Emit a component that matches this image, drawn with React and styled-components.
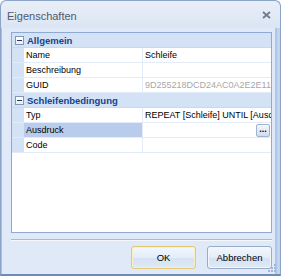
import React from 'react';
import styled, { createGlobalStyle } from 'styled-components';

const GlobalStyle = createGlobalStyle`
  html, body {
    margin: 0;
    padding: 0;
    background: #ffffff;
  }
  body {
    font-family: "Liberation Sans", Arial, sans-serif;
  }
`;

const groups = [
  {
    title: 'Allgemein',
    rows: [
      { label: 'Name', value: 'Schleife' },
      { label: 'Beschreibung', value: '' },
      { label: 'GUID', value: '9D255218DCD24AC0A2E2E1122', disabled: true },
    ],
  },
  {
    title: 'Schleifenbedingung',
    rows: [
      { label: 'Typ', value: 'REPEAT [Schleife] UNTIL [Ausdruck]' },
      { label: 'Ausdruck', value: '', selected: true, button: true },
      { label: 'Code', value: '' },
    ],
  },
];

const App = () => {
  return (
    <>
      <GlobalStyle />
      <Window>
        <TitleBar>
          <Title>Eigenschaften</Title>
          <Close>
            <svg width="9" height="8" viewBox="0 0 9 8">
              <path d="M1 1 L8 7 M8 1 L1 7" stroke="#6f7c8e" strokeWidth="1.8" />
            </svg>
          </Close>
        </TitleBar>
        <Body>
          <Grid>
            {groups.map((g) => (
              <React.Fragment key={g.title}>
                <Category>
                  <Margin>
                    <Toggle />
                  </Margin>
                  <CategoryText>{g.title}</CategoryText>
                </Category>
                {g.rows.map((r) => (
                  <Row key={r.label}>
                    <Margin />
                    <Label selected={r.selected}>{r.label}</Label>
                    <Value disabled={r.disabled}>
                      <span>{r.value}</span>
                      {r.button && <DotsButton>...</DotsButton>}
                    </Value>
                  </Row>
                ))}
              </React.Fragment>
            ))}
          </Grid>
          <Separator />
          <Buttons>
            <Button primary>OK</Button>
            <Button>Abbrechen</Button>
          </Buttons>
          <Grip>
            <svg width="8" height="8" viewBox="0 0 8 8">
              <g fill="#9fb6d6">
                <rect x="6" y="0" width="2" height="2" />
                <rect x="3" y="3" width="2" height="2" />
                <rect x="6" y="3" width="2" height="2" />
                <rect x="0" y="6" width="2" height="2" />
                <rect x="3" y="6" width="2" height="2" />
                <rect x="6" y="6" width="2" height="2" />
              </g>
            </svg>
          </Grip>
        </Body>
      </Window>
    </>
  );
};

export default App;

const Window = styled.div`
  position: relative;
  box-sizing: border-box;
  width: 281px;
  height: 276px;
  display: flex;
  flex-direction: column;
  border: 1px solid #8ba4c7;
  border-bottom: 2px solid #6f8cb8;
  border-radius: 6px 6px 0 0;
  background: #dfe9f7;
  box-shadow: inset 1px 0 0 #a9bfdf, inset -3px 0 0 #c2d4ec, inset -5px 0 0 #aec5e4;
  overflow: hidden;
`;

const TitleBar = styled.div`
  height: 27px;
  display: flex;
  align-items: center;
  justify-content: space-between;
  padding: 0 9px 0 6px;
  background: linear-gradient(#e9eff8, #dbe5f3);
  border-radius: 6px 6px 0 0;
`;

const Title = styled.div`
  font-size: 11px;
  color: #4d5b6e;
  padding-top: 3px;
`;

const Close = styled.div`
  display: flex;
  padding-top: 1px;
`;

const Body = styled.div`
  flex: 1;
  display: flex;
  flex-direction: column;
  padding: 4px 8px 0 10px;
`;

const Grid = styled.div`
  box-sizing: border-box;
  height: 201px;
  border: 1px solid #8eaad3;
  background: #ffffff;
  overflow: hidden;
`;

const Category = styled.div`
  display: flex;
  height: 15px;
  align-items: center;
  background: #d4e2f6;
  border-bottom: 1px solid #c7d8f0;
  box-sizing: border-box;
`;

const Margin = styled.div`
  width: 12px;
  height: 100%;
  flex: none;
  display: flex;
  align-items: center;
  justify-content: center;
  background: #d4e2f6;
`;

const Toggle = styled.div`
  position: relative;
  box-sizing: border-box;
  width: 9px;
  height: 9px;
  margin-left: 2px;
  border: 1px solid #8596b0;
  background: linear-gradient(#ffffff, #e6ecf5);
  &::after {
    content: '';
    position: absolute;
    left: 1px;
    top: 3px;
    width: 5px;
    height: 1px;
    background: #1c3a6e;
  }
`;

const CategoryText = styled.div`
  padding-left: 3px;
  font-size: 9.5px;
  font-weight: bold;
  color: #15428b;
`;

const Row = styled.div`
  display: flex;
  height: 15px;
  box-sizing: border-box;
  border-bottom: 1px solid #e2ebf7;
`;

const Label = styled.div`
  width: 119px;
  flex: none;
  box-sizing: border-box;
  padding-left: 2px;
  display: flex;
  align-items: center;
  font-size: 9px;
  color: #000000;
  border-right: 1px solid #e2ebf7;
  background: ${(p) => (p.selected ? '#b9cceb' : '#ffffff')};
`;

const Value = styled.div`
  flex: 1;
  min-width: 0;
  display: flex;
  align-items: center;
  padding-left: 2px;
  font-size: 9px;
  white-space: nowrap;
  overflow: hidden;
  color: ${(p) => (p.disabled ? '#a7a7a7' : '#000000')};
  span {
    flex: 1;
    overflow: hidden;
  }
`;

const DotsButton = styled.div`
  flex: none;
  box-sizing: border-box;
  width: 14px;
  height: 13px;
  margin-right: 1px;
  border: 1px solid #9fb3d1;
  border-radius: 2px;
  background: linear-gradient(#f5f8fd, #cfddf1);
  font-size: 9px;
  font-weight: bold;
  line-height: 8px;
  text-align: center;
  color: #000000;
`;

const Separator = styled.div`
  height: 1px;
  margin-top: 6px;
  background: #a5bbdb;
  border-bottom: 1px solid #f4f8fd;
`;

const Buttons = styled.div`
  display: flex;
  justify-content: flex-end;
  gap: 11px;
  margin-top: 5px;
`;

const Button = styled.div`
  box-sizing: border-box;
  width: 65px;
  height: 23px;
  display: flex;
  align-items: center;
  justify-content: center;
  border: 1px solid ${(p) => (p.primary ? '#e2c977' : '#98acc9')};
  border-radius: 3px;
  background: linear-gradient(#f4f8fd 0%, #e3ecf8 50%, #d5e2f3 51%, #dfe9f6 100%);
  box-shadow: inset 0 0 0 1px ${(p) => (p.primary ? '#fbefc2' : '#f3f7fc')};
  font-size: 9.5px;
  color: #000000;
`;

const Grip = styled.div`
  position: absolute;
  right: 4px;
  bottom: 2px;
  display: flex;
`;
